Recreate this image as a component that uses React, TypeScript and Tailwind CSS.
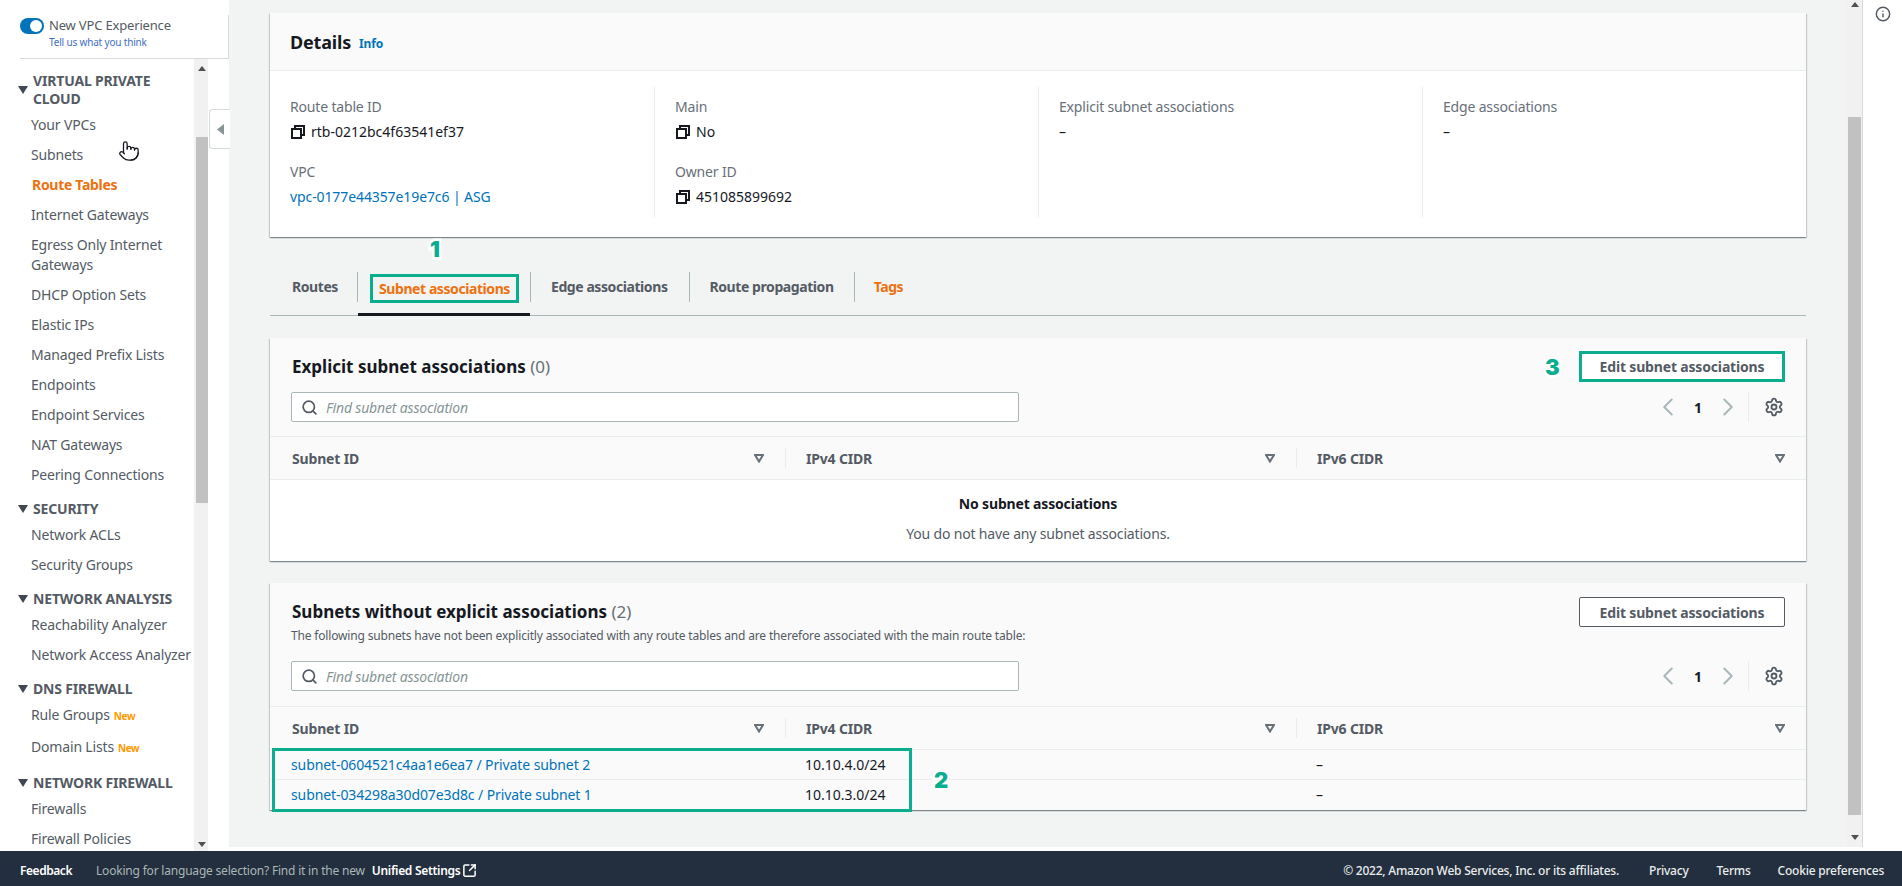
import { ChevronLeft, ChevronRight, Info, Pointer, Search, Settings, SquareArrowOutUpRight } from "lucide-react";

type NavEntry =
  | { kind: "group"; label: string }
  | { kind: "item"; label: string; active?: boolean; badge?: boolean };

const nav: NavEntry[] = [
  { kind: "group", label: "VIRTUAL PRIVATE CLOUD" },
  { kind: "item", label: "Your VPCs" },
  { kind: "item", label: "Subnets" },
  { kind: "item", label: "Route Tables", active: true },
  { kind: "item", label: "Internet Gateways" },
  { kind: "item", label: "Egress Only Internet Gateways" },
  { kind: "item", label: "DHCP Option Sets" },
  { kind: "item", label: "Elastic IPs" },
  { kind: "item", label: "Managed Prefix Lists" },
  { kind: "item", label: "Endpoints" },
  { kind: "item", label: "Endpoint Services" },
  { kind: "item", label: "NAT Gateways" },
  { kind: "item", label: "Peering Connections" },
  { kind: "group", label: "SECURITY" },
  { kind: "item", label: "Network ACLs" },
  { kind: "item", label: "Security Groups" },
  { kind: "group", label: "NETWORK ANALYSIS" },
  { kind: "item", label: "Reachability Analyzer" },
  { kind: "item", label: "Network Access Analyzer" },
  { kind: "group", label: "DNS FIREWALL" },
  { kind: "item", label: "Rule Groups", badge: true },
  { kind: "item", label: "Domain Lists", badge: true },
  { kind: "group", label: "NETWORK FIREWALL" },
  { kind: "item", label: "Firewalls" },
  { kind: "item", label: "Firewall Policies" },
];

const ScrollArrow = ({ down }: { down?: boolean }) => (
  <svg width="8" height="5" viewBox="0 0 8 5" className="block">
    <polygon points={down ? "0,0 8,0 4,5" : "0,5 8,5 4,0"} fill="#505050" />
  </svg>
);

const CopyIcon = () => (
  <svg width="16" height="16" viewBox="0 0 16 16" fill="none" stroke="#16191f" strokeWidth="2" className="shrink-0">
    <rect x="2" y="5" width="9" height="9" />
    <path d="M5 5V2h9v9h-3" />
  </svg>
);

const FilterCaret = () => (
  <svg width="10" height="9" viewBox="0 0 10 9" fill="none" stroke="#687078" strokeWidth="2" className="shrink-0">
    <polygon points="1,1 9,1 5,7.5" />
  </svg>
);

const Step = ({ n, className }: { n: string; className: string }) => (
  <span
    className={`absolute font-['Inter',sans-serif] font-black text-[22px] leading-none tracking-normal text-[#0aae8e] [paint-order:stroke] [-webkit-text-stroke:5px_white] ${className}`}
  >
    {n}
  </span>
);

const Sidebar = () => (
  <aside className="w-[229px] shrink-0 flex flex-col bg-white">
    <div className="ml-[20px] h-[59px] shrink-0 border-b border-[#d5dbdb] pt-[15px]">
      <div className="h-[43px] border-r border-[#d5dbdb] flex items-start gap-[5px] pt-[3px]">
        <span className="w-[24px] h-[16px] rounded-full bg-[#0073bb] flex items-center justify-end pr-[2px]">
          <span className="w-[12px] h-[12px] rounded-full bg-white" />
        </span>
        <div className="flex flex-col">
          <span className="text-[13px] leading-[15px] text-[#545b64]">New VPC Experience</span>
          <span className="text-[10px] leading-[16px] mt-[1px] text-[#3f6fc4]">Tell us what you think</span>
        </div>
      </div>
    </div>
    <div className="flex-1 min-h-0 flex">
      <nav className="w-[194px] shrink-0 overflow-hidden pt-[3px] text-[14px] text-[#545b64]">
        {nav.map((entry) =>
          entry.kind === "group" ? (
            <div key={entry.label} className="flex items-center pl-[18px] pt-[10px] pb-[2px]">
              <svg width="10" height="8" viewBox="0 0 10 8" className="shrink-0">
                <polygon points="0,0 10,0 5,8" fill="#414750" />
              </svg>
              <span className="ml-[5px] font-bold leading-[18px]">{entry.label}</span>
            </div>
          ) : (
            <div
              key={entry.label}
              className={`pl-[31px] py-[5px] leading-[20px] ${entry.active ? "pl-[32px] font-bold text-[#ec7211] tracking-[-0.3px]" : ""} ${entry.badge ? "h-[32px]" : ""}`}
            >
              {entry.label}
              {entry.badge && <span className="ml-[4px] text-[10px] leading-none font-bold tracking-[-0.4px] text-[#ff9900]">New</span>}
            </div>
          ),
        )}
      </nav>
      <div className="w-[14px] shrink-0 bg-[#f1f1f1] flex flex-col items-end">
        <div className="w-[12px] h-[78px] pt-[7px] flex justify-center items-start">
          <ScrollArrow />
        </div>
        <div className="w-[12px] h-[366px] bg-[#c1c1c1]" />
        <div className="w-[12px] flex-1 flex justify-center items-end pb-[4px]">
          <ScrollArrow down />
        </div>
      </div>
    </div>
  </aside>
);

const Card = ({ children }: { children: React.ReactNode }) => (
  <section className="w-[1536px] bg-white shadow-[0_1px_1px_0_rgba(0,28,36,0.3),1px_1px_1px_0_rgba(0,28,36,0.15),-1px_1px_1px_0_rgba(0,28,36,0.15)]">
    {children}
  </section>
);

const Detail = ({ label, children }: { label: string; children: React.ReactNode }) => (
  <div>
    <div className="text-[#687078] leading-[20px]">{label}</div>
    <div className="leading-[20px] mt-[5px] flex items-center gap-[5px] tracking-normal text-[#16191f]">{children}</div>
  </div>
);

const DetailColumn = ({ children, first }: { children: React.ReactNode; first?: boolean }) => (
  <div className={`h-[130px] pl-[20px] pt-[10px] ${first ? "" : "border-l border-[#eaeded]"}`}>{children}</div>
);

const DetailsCard = () => (
  <Card>
    <div className="h-[58px] bg-[#fafafa] border-b border-[#eaeded] flex items-center pl-[20px] pt-[2px]">
      <h2 className="text-[18px] font-bold text-[#16191f]">Details</h2>
      <span className="ml-[8px] mt-[2px] text-[12px] font-bold text-[#0073bb]">Info</span>
    </div>
    <div className="grid grid-cols-4 pt-[16px] pb-[20px] text-[14px]">
      <DetailColumn first>
        <div className="flex flex-col gap-[20px]">
          <Detail label="Route table ID">
            <CopyIcon />
            rtb-0212bc4f63541ef37
          </Detail>
          <Detail label="VPC">
            <span className="text-[#0073bb] tracking-[-0.1px]">vpc-0177e44357e19e7c6 | ASG</span>
          </Detail>
        </div>
      </DetailColumn>
      <DetailColumn>
        <div className="flex flex-col gap-[20px]">
          <Detail label="Main">
            <CopyIcon />
            No
          </Detail>
          <Detail label="Owner ID">
            <CopyIcon />
            451085899692
          </Detail>
        </div>
      </DetailColumn>
      <DetailColumn>
        <Detail label="Explicit subnet associations">–</Detail>
      </DetailColumn>
      <DetailColumn>
        <Detail label="Edge associations">–</Detail>
      </DetailColumn>
    </div>
  </Card>
);

const TabSep = () => <div className="w-px h-[30px] bg-[#aab7b8] shrink-0" />;

const Tabs = () => (
  <div className="relative mt-[35px] w-[1536px] h-[44px] border-b border-[#aab7b8] flex items-start pl-[22px] text-[14px] font-bold tracking-[-0.42px] text-[#545b64]">
    <span className="leading-[30px] pr-[19px]">Routes</span>
    <TabSep />
    <div className="h-[44px] pl-[12px] pr-[11px] border-b-[3px] border-[#16191f] shrink-0">
      <span className="block h-[29px] mt-[2px] leading-[23px] px-[6px] border-[3px] border-[#0aae8e] text-[#ec7211]">
        Subnet associations
      </span>
    </div>
    <TabSep />
    <span className="leading-[30px] pl-[20px] pr-[21px]">Edge associations</span>
    <TabSep />
    <span className="leading-[30px] px-[20px]">Route propagation</span>
    <TabSep />
    <span className="leading-[30px] pl-[19px] text-[#ec7211]">Tags</span>
    <Step n="1" className="left-[160px] -top-[34px]" />
  </div>
);

const SearchBox = () => (
  <div className="w-[728px] h-[30px] ml-[21px] border border-[#aab7b8] rounded-[2px] bg-white flex items-center pl-[9px] gap-[8px]">
    <Search size={17} strokeWidth={2.4} className="text-[#545b64]" />
    <span className="italic text-[14px] text-[#879596]">Find subnet association</span>
  </div>
);

const Pagination = () => (
  <div className="h-[30px] flex items-center pr-[2px]">
    <ChevronLeft size={30} strokeWidth={1.6} className="text-[#aab7b8] -mx-[5px]" />
    <span className="w-[40px] text-center text-[14px] font-bold text-[#16191f]">1</span>
    <ChevronRight size={30} strokeWidth={1.6} className="text-[#aab7b8] -mx-[5px]" />
    <div className="w-px h-[30px] bg-[#eaeded] ml-[10px]" />
    <Settings size={20} strokeWidth={2.2} className="text-[#545b64] ml-[15px] -mr-[1px]" />
  </div>
);

const TableHead = ({ className }: { className: string }) => (
  <div className={`grid grid-cols-[515px_511px_1fr] bg-[#fafafa] border-b border-[#eaeded] text-[14px] font-bold text-[#545b64] ${className}`}>
    {["Subnet ID", "IPv4 CIDR", "IPv6 CIDR"].map((col, i) => (
      <div key={col} className={`flex items-center justify-between h-[20px] pr-[21px] ${i === 0 ? "pl-[22px]" : "pl-[20px] border-l border-[#eaeded]"}`}>
        {col}
        <FilterCaret />
      </div>
    ))}
  </div>
);

const rows = [
  { id: "subnet-0604521c4aa1e6ea7 / Private subnet 2", cidr: "10.10.4.0/24" },
  { id: "subnet-034298a30d07e3d8c / Private subnet 1", cidr: "10.10.3.0/24" },
];

const ExplicitCard = () => (
  <Card>
    <div className="bg-[#fafafa] h-[99px] flex justify-between border-b border-[#eaeded]">
      <div>
        <h2 className="ml-[22px] mt-[17px] text-[17px] leading-[24px] tracking-normal font-bold text-[#16191f]">
          Explicit subnet associations <span className="font-normal text-[#687078]">(0)</span>
        </h2>
        <div className="mt-[13px]">
          <SearchBox />
        </div>
      </div>
      <div className="pr-[21px] flex flex-col items-end">
        <div className="relative mt-[13px]">
          <button className="w-[206px] h-[31px] border-[3px] border-[#0aae8e] bg-white text-[14px] font-bold text-[#545b64]">
            Edit subnet associations
          </button>
          <Step n="3" className="-left-[34px] top-[5px]" />
        </div>
        <div className="mt-[10px]">
          <Pagination />
        </div>
      </div>
    </div>
    <TableHead className="py-[11px]" />
    <div className="h-[81px] text-[14px] text-center pt-[14px]">
      <div className="font-bold leading-[20px] text-[#16191f]">No subnet associations</div>
      <div className="mt-[10px] leading-[20px] text-[#545b64]">You do not have any subnet associations.</div>
    </div>
  </Card>
);

const ImplicitCard = () => (
  <Card>
    <div className="bg-[#fafafa] h-[124px] flex justify-between border-b border-[#eaeded]">
      <div>
        <h2 className="ml-[22px] mt-[17px] text-[17px] leading-[24px] tracking-normal font-bold text-[#16191f]">
          Subnets without explicit associations <span className="font-normal text-[#687078]">(2)</span>
        </h2>
        <p className="ml-[21px] mt-[4px] text-[12px] leading-[16px] text-[#545b64]">
          The following subnets have not been explicitly associated with any route tables and are therefore associated with the main route table:
        </p>
        <div className="mt-[17px]">
          <SearchBox />
        </div>
      </div>
      <div className="pr-[21px] flex flex-col items-end">
        <button className="mt-[14px] w-[206px] h-[30px] border border-[#545b64] rounded-[2px] bg-white text-[14px] font-bold text-[#545b64]">
          Edit subnet associations
        </button>
        <div className="mt-[34px]">
          <Pagination />
        </div>
      </div>
    </div>
    <TableHead className="py-[11px]" />
    <div className="relative text-[14px] leading-[20px]">
      {rows.map((row, i) => (
        <div key={row.id} className={`grid grid-cols-[515px_511px_1fr] h-[30px] items-center bg-[#fafafa] ${i === 0 ? "border-b border-[#eaeded]" : ""}`}>
          <span className="pl-[21px] text-[#0073bb] tracking-[-0.1px]">{row.id}</span>
          <span className="pl-[20px] text-[#16191f] tracking-normal">{row.cidr}</span>
          <span className="pl-[20px] text-[#16191f]">–</span>
        </div>
      ))}
      {/* annotation drawn on top of the two rows */}
      <div className="absolute left-[2px] -top-[2px] w-[640px] h-[64px] border-[3px] border-[#0aae8e]" />
      <Step n="2" className="left-[664px] top-[19px]" />
    </div>
  </Card>
);

const Main = () => (
  <div className="h-[847px] flex border-r border-[#d5dbdb]">
    <main className="w-[1618px] bg-[#f2f3f3] overflow-hidden pl-[41px] pt-[13px]">
      <DetailsCard />
      <Tabs />
      <div className="mt-[22px]">
        <ExplicitCard />
      </div>
      <div className="mt-[22px]">
        <ImplicitCard />
      </div>
    </main>
    <div className="w-[15px] bg-[#f1f1f1] flex flex-col items-center">
      <div className="h-[117px] pt-[2px]">
        <ScrollArrow />
      </div>
      <div className="w-[13px] h-[698px] bg-[#c1c1c1]" />
      <div className="flex-1 flex items-end pb-[7px]">
        <ScrollArrow down />
      </div>
    </div>
  </div>
);

const Footer = () => (
  <footer className="h-[35px] shrink-0 bg-[#232f3e] flex items-center justify-between pl-[20px] pr-[18px] pt-[4px] text-[12px] font-medium tracking-[-0.2px] text-[#eaeded]">
    <div className="flex items-center">
      <span className="text-white font-semibold tracking-[-0.45px]">Feedback</span>
      <span className="ml-[24px] font-normal text-[#aab7b8]">Looking for language selection? Find it in the new</span>
      <span className="ml-[7px] text-white font-semibold tracking-[-0.3px]">Unified Settings</span>
      <SquareArrowOutUpRight size={15} strokeWidth={2.4} className="ml-[2px] text-white" />
    </div>
    <div className="flex items-center tracking-[-0.22px]">
      <span>© 2022, Amazon Web Services, Inc. or its affiliates.</span>
      <span className="ml-[30px]">Privacy</span>
      <span className="ml-[28px]">Terms</span>
      <span className="ml-[27px]">Cookie preferences</span>
    </div>
  </footer>
);

export default function App() {
  return (
    <div className="relative h-screen flex flex-col overflow-hidden bg-white tracking-[-0.17px] font-['Noto_Sans',sans-serif]">
      <div className="flex-1 min-h-0 flex">
        <Sidebar />
        <Main />
        <div className="flex-1 flex justify-center pt-[6px]">
          <Info size={16} strokeWidth={2.2} className="text-[#545b64]" />
        </div>
      </div>
      <Footer />
      {/* drawer toggle hanging off the side nav */}
      <div className="absolute left-[209px] top-[109px] w-[21px] h-[40px] bg-white border border-r-0 border-[#d5dbdb] rounded-l-[4px] flex items-center justify-center">
        <svg width="7" height="11" viewBox="0 0 7 11">
          <polygon points="7,0 7,11 0,5.5" fill="#879596" />
        </svg>
      </div>
      {/* mouse pointer captured in the screenshot */}
      <Pointer size={22} strokeWidth={1.4} className="absolute left-[118px] top-[140px] text-[#16191f]" />
    </div>
  );
}
